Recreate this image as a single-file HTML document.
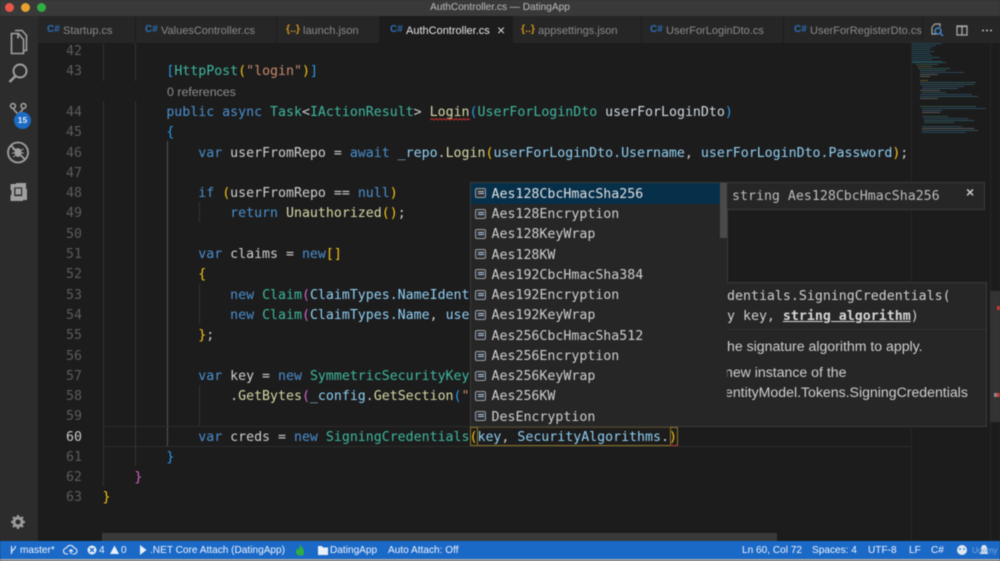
<!DOCTYPE html>
<html><head><meta charset="utf-8"><style>
html,body{margin:0;padding:0;background:#2a2a2a}
#r{position:relative;width:1000px;height:561px;overflow:hidden;background:#1c1c1c;filter:blur(.4px);font-family:"Liberation Sans",sans-serif}
#r div,#r svg,#r span.a{position:absolute}
.l{left:102.5px;height:20px;margin-top:2px;font:13.25px/20px "DejaVu Sans Mono",monospace;white-space:pre;color:#cfcfcf}
.n{left:60px;width:22px;text-align:right;height:20px;margin-top:2px;font:13.27px/20px "DejaVu Sans Mono",monospace;color:#5c5c5c}
.k{color:#4a90d0}.t{color:#3fb8a0}.v{color:#8fd0f5}.f{color:#d8d8a8}.s{color:#c98a6c}.y{color:#f5c518}.p{color:#d066c8}.b{color:#2a9ae8}
.g{width:1px;background:#333}
.tab{top:16px;height:27px;background:#262626;border-right:1px solid #1e1e1e;box-sizing:border-box}
.tl{top:16px;height:27px;font-size:11px;line-height:30px;color:#8a8a8a;white-space:pre}
.ic{top:16px;font:bold 10px/27px "Liberation Sans",sans-serif;color:#2a6fb5}
.ij{top:16px;font:bold 10.5px/27px "Liberation Sans",sans-serif;color:#c9921e}
.sb{top:541.5px;height:18px;line-height:18px;font-size:10.1px;color:#eef4fc;white-space:pre}
.w{left:491.5px;height:20px;margin-top:2px;font:13.27px/20px "DejaVu Sans Mono",monospace;color:#cfcfcf;white-space:pre}
.wi{left:475px;width:9px;height:8px;border:1px solid #a0a0a0;border-radius:2px;background:#2a3038}
.wi:after{content:"";position:absolute;left:1.5px;right:1.5px;top:2px;height:3px;border-top:1px solid #b8c8d8;border-bottom:1px solid #b8c8d8;box-sizing:border-box}
.d{white-space:pre;left:0}
</style></head><body><div id="r">

<div style="left:0;top:0;width:1000px;height:16px;background:#393939"></div>
<div style="left:4.5px;top:2.5px;width:9px;height:9px;border-radius:50%;background:#e8564a"></div>
<div style="left:20.5px;top:2.5px;width:9px;height:9px;border-radius:50%;background:#e8a02e"></div>
<div style="left:36.5px;top:2.5px;width:9px;height:9px;border-radius:50%;background:#2fae42"></div>
<div style="left:0;width:1000px;top:0;height:15px;text-align:center;line-height:15px;font-size:10.1px;color:#bdbdbd">AuthController.cs — DatingApp</div>

<div style="left:0;top:16px;width:38px;height:525px;background:#2c2c2c"></div>
<svg style="left:0;top:16px" width="38" height="525" fill="none" stroke="#a0a0a0" stroke-width="1.6">
<path d="M11.500 17.500v20h12v-14l-5-6zM15 14.500h7l4.500 5v15h-3"/>
<path d="M18 22.500v-5"/>
<circle cx="20" cy="55" r="6.500" stroke-width="1.900"/><path d="M15.500 60l-6 6" stroke-width="2.400"/>
<circle cx="13" cy="90" r="2.400"/><circle cx="23.500" cy="90" r="2.400"/><path d="M13.500 92.500c1 3 3 3.500 4.500 5.500M23 92.500c-1 3-3 3.500-4.500 5.500M18 98v3"/>
<circle cx="18" cy="136.500" r="10" stroke-width="1.800"/><path d="M11 129.500l14 14" stroke-width="1.800"/><ellipse cx="18" cy="136.500" rx="3.500" ry="4.500" fill="#a0a0a0" stroke="none"/><path d="M12.500 133l3 1.500M23.500 133l-3 1.500M12 137h3M24 137h-3M13 141l2.500-1.500M23 141l-2.500-1.500" stroke-width="1"/>
<path d="M10.500 168h5.500v-1h10v6h1v11h-4v1h-12.500v-6h1v-5h-1z" fill="#a0a0a0" stroke="none"/><rect x="14.800" y="172" width="6.800" height="7.500" fill="#2c2c2c" stroke="#2c2c2c" stroke-width="1.200"/><rect x="15.500" y="172.500" width="5.500" height="6" fill="#a0a0a0" stroke="none"/>
<g stroke="#9a9a9a"><circle cx="18" cy="506" r="4" stroke-width="3"/><path d="M18 499v3M18 510v3M11 506h3M22 506h3M13 501l2 2M21 509l2 2M23 501l-2 2M15 509l-2 2" stroke-width="2.200"/></g>
</svg>
<div style="left:14px;top:112px;width:17px;height:17px;border-radius:50%;background:#1b6ac4;color:#e8eef5;font:bold 8.500px/17px 'Liberation Sans',sans-serif;text-align:center">15</div>

<div style="left:38px;top:16px;width:962px;height:27px;background:#262626"></div>
<div class="tab" style="left:38px;width:98px"></div>
<div class="tab" style="left:136px;width:141px"></div>
<div class="tab" style="left:277px;width:103px"></div>
<div class="tab" style="left:380px;width:133px;background:#1c1c1c"></div>
<div class="tab" style="left:513px;width:129px"></div>
<div class="tab" style="left:642px;width:142px"></div>
<div class="tab" style="left:784px;width:139px"></div>
<div class="ic" style="left:47px">C#</div><div class="tl" style="left:63px">Startup.cs</div>
<div class="ic" style="left:145px">C#</div><div class="tl" style="left:161px">ValuesController.cs</div>
<div class="ij" style="left:286px">{..}</div><div class="tl" style="left:303px">launch.json</div>
<div class="ic" style="left:390px">C#</div><div class="tl" style="left:406px;color:#e6e6e6">AuthController.cs</div>
<div class="tl" style="left:497px;color:#d8d8d8;font-size:14px;line-height:28px">×</div>
<div class="ij" style="left:521px">{..}</div><div class="tl" style="left:538px">appsettings.json</div>
<div class="ic" style="left:650px">C#</div><div class="tl" style="left:666px">UserForLoginDto.cs</div>
<div class="ic" style="left:794px">C#</div><div class="tl" style="left:810px">UserForRegisterDto.cs</div>
<svg style="left:925px;top:16px" width="75" height="27" fill="none" stroke="#a8a8a8" stroke-width="1.200">
<path d="M7 11l3-3h5v3M7 11v7h5"/><circle cx="13" cy="15" r="3" stroke="#3f86c8" stroke-width="1.500"/><path d="M15 17l3 3" stroke="#3f86c8" stroke-width="1.500"/>
<rect x="32" y="10" width="10" height="9" stroke-width="1.300"/><path d="M37 10v9M32 10.500h10" stroke-width="1.300"/>
<circle cx="58" cy="14.500" r="1" fill="#b8b8b8" stroke="none"/><circle cx="62" cy="14.500" r="1" fill="#b8b8b8" stroke="none"/><circle cx="66" cy="14.500" r="1" fill="#b8b8b8" stroke="none"/>
</svg>

<div class="g" style="left:103px;top:43px;height:38px"></div><div class="g" style="left:135px;top:43px;height:38px"></div>
<div class="g" style="left:103px;top:101px;height:385px"></div><div class="g" style="left:135px;top:101px;height:365px"></div>
<div class="g" style="left:167px;top:141px;height:305px;background:#555"></div>
<div class="g" style="left:199px;top:202px;height:20px"></div>
<div class="g" style="left:199px;top:283px;height:41px"></div>
<div class="g" style="left:199px;top:385px;height:41px"></div>
<div style="left:911px;top:43px;width:1px;height:498px;background:#262626"></div>
<div style="left:990px;top:43px;width:1px;height:498px;background:#262626"></div>
<div style="left:103px;top:426px;width:808px;height:19px;border-top:1px solid #2c2c2c;border-bottom:1px solid #2c2c2c"></div>

<div class="n" style="top:40px">42</div>
<div class="n" style="top:60px">43</div>
<div class="n" style="top:101px">44</div>
<div class="n" style="top:121px">45</div>
<div class="n" style="top:142px">46</div>
<div class="n" style="top:162px">47</div>
<div class="n" style="top:182px">48</div>
<div class="n" style="top:202px">49</div>
<div class="n" style="top:223px">50</div>
<div class="n" style="top:243px">51</div>
<div class="n" style="top:263px">52</div>
<div class="n" style="top:284px">53</div>
<div class="n" style="top:304px">54</div>
<div class="n" style="top:324px">55</div>
<div class="n" style="top:345px">56</div>
<div class="n" style="top:365px">57</div>
<div class="n" style="top:385px">58</div>
<div class="n" style="top:405px">59</div>
<div class="n" style="top:426px;color:#c8c8c8">60</div>
<div class="n" style="top:446px">61</div>
<div class="n" style="top:466px">62</div>
<div class="n" style="top:486px">63</div>

<div class="l" style="top:60px">        <span class="b">[</span><span class="t">HttpPost</span><span class="y">(</span><span class="s">"login"</span><span class="y">)</span><span class="b">]</span></div>
<div style="left:167px;top:84.500px;font-size:12.400px;line-height:15px;color:#8e8e8e">0 references</div>
<div class="l" style="top:101px">        <span class="k">public async</span> <span class="t">Task</span>&lt;<span class="t">IActionResult</span>&gt; <span class="f">Login</span><span class="b">(</span><span class="t">UserForLoginDto</span> <span class="v" style="color:#d0d8e0">userForLoginDto</span><span class="b">)</span></div>
<svg style="left:430px;top:118px" width="40" height="4" fill="none" stroke="#c83030" stroke-width=".9"><path d="M0 2l2-1.500 2 1.500 2-1.500 2 1.500 2-1.500 2 1.500 2-1.500 2 1.500 2-1.500 2 1.500 2-1.500 2 1.500 2-1.500 2 1.500 2-1.500 2 1.500 2-1.500 2 1.500 2-1.500 2 1.500"/></svg>
<div class="l" style="top:121px">        <span class="b">{</span></div>
<div class="l" style="top:142px">            <span class="k">var</span> userFromRepo = <span class="k">await</span> <span class="v">_repo</span>.<span class="f">Login</span><span class="y">(</span><span class="v">userForLoginDto.Username</span>, <span class="v">userForLoginDto.Password</span><span class="y">)</span>;</div>
<div class="l" style="top:182px">            <span class="k">if</span> <span class="y">(</span>userFromRepo == <span class="k">null</span><span class="y">)</span></div>
<div class="l" style="top:202px">                <span class="k">return</span> <span class="f">Unauthorized</span><span class="y">()</span>;</div>
<div class="l" style="top:243px">            <span class="k">var</span> claims = <span class="k">new</span><span class="y">[]</span></div>
<div class="l" style="top:263px">            <span class="y">{</span></div>
<div class="l" style="top:284px">                <span class="k">new</span> <span class="t">Claim</span><span class="p">(</span><span class="v">ClaimTypes.NameIdent</span></div>
<div class="l" style="top:304px">                <span class="k">new</span> <span class="t">Claim</span><span class="p">(</span><span class="v">ClaimTypes.Name</span>, <span class="v">use</span></div>
<div class="l" style="top:324px">            <span class="y">}</span>;</div>
<div class="l" style="top:365px">            <span class="k">var</span> key = <span class="k">new</span> <span class="t">SymmetricSecurityKey</span></div>
<div class="l" style="top:385px">                .<span class="f">GetBytes</span><span class="p">(</span><span class="v">_config</span>.<span class="f">GetSection</span><span class="b">(</span><span class="s">"</span></div>
<div class="l" style="top:426px">            <span class="k">var</span> creds = <span class="k">new</span> <span class="t">SigningCredentials</span><span class="y">(</span><span class="v">key</span>, <span class="v">SecurityAlgorithms</span>.<span class="y">)</span></div>
<div class="l" style="top:446px">        <span class="b">}</span></div>
<div class="l" style="top:466px">    <span class="p">}</span></div>
<div class="l" style="top:486px"><span class="y">}</span></div>

<div style="left:470px;top:427px;width:208px;height:1px;background:#4a4020"></div>
<div style="left:470px;top:445px;width:208px;height:1px;background:#8c7426"></div>
<div style="left:470px;top:427px;width:8px;height:19px;border:1px solid #8c7426;border-bottom:0;box-sizing:border-box"></div>
<div style="left:670px;top:427px;width:8px;height:19px;border:1px solid #8c7426;border-bottom:0;box-sizing:border-box"></div>
<div style="left:670px;top:445px;width:8px;height:1px;background:#c0392b"></div>

<svg style="left:912px;top:43px" width="78" height="110"><g opacity=".55">
<rect x="0" y="0" width="30" height="1" fill="#2a6a90"/><rect x="0" y="2" width="24" height="1" fill="#2a7a80"/><rect x="0" y="4" width="20" height="1" fill="#2a6a90"/><rect x="0" y="6" width="18" height="1" fill="#2a7a80"/><rect x="0" y="8" width="22" height="1" fill="#2a6a90"/><rect x="0" y="10" width="18" height="1" fill="#2a7a80"/><rect x="0" y="12" width="20" height="1" fill="#2a6a90"/><rect x="0" y="14" width="28" height="1" fill="#2a7a80"/><rect x="0" y="16" width="20" height="1" fill="#2a6a90"/><rect x="0" y="18" width="30" height="1" fill="#2a7a80"/>
<rect x="0" y="19" width="34" height="1" fill="#2a7a80"/>
<rect x="4" y="21" width="22" height="1" fill="#3a7a70"/><rect x="6" y="23" width="14" height="1" fill="#806a40"/><rect x="6" y="25" width="32" height="1" fill="#3a7a70"/><rect x="8" y="27" width="26" height="1" fill="#3a7a90"/><rect x="8" y="29" width="44" height="1" fill="#3a6a90"/><rect x="8" y="31" width="18" height="1" fill="#888"/><rect x="8" y="33" width="10" height="1" fill="#888"/>
<rect x="8" y="37" width="8" height="1" fill="#a08030"/><rect x="8" y="39" width="56" height="1" fill="#3a7a90"/><rect x="8" y="41" width="54" height="1" fill="#3a7a70"/><rect x="10" y="43" width="42" height="1" fill="#3a6a90"/><rect x="10" y="45" width="36" height="1" fill="#3a7a90"/><rect x="8" y="47" width="20" height="1" fill="#888"/><rect x="10" y="49" width="24" height="1" fill="#3a7a70"/><rect x="8" y="51" width="52" height="1" fill="#3a6a90"/><rect x="8" y="53" width="58" height="1" fill="#3a7a90"/><rect x="8" y="55" width="18" height="1" fill="#888"/>
<rect x="8" y="63" width="56" height="1" fill="#3a7a70"/><rect x="10" y="65" width="64" height="1" fill="#3a6a90"/><rect x="10" y="67" width="20" height="1" fill="#3a7a90"/><rect x="10" y="69" width="18" height="1" fill="#888"/><rect x="10" y="73" width="26" height="1" fill="#3a7a70"/><rect x="12" y="75" width="44" height="1" fill="#3a6a90"/><rect x="12" y="77" width="50" height="1" fill="#3a7a90"/><rect x="12" y="79" width="30" height="1" fill="#3a7a70"/><rect x="10" y="83" width="40" height="1" fill="#3a6a90"/><rect x="10" y="85" width="52" height="1" fill="#888"/><rect x="10" y="87" width="56" height="1" fill="#3a7a90"/><rect x="10" y="89" width="44" height="1" fill="#3a6a90"/>
</g></svg>

<div style="left:990px;top:291px;width:10px;height:131px;background:#333"></div>
<div style="left:997px;top:306px;width:3px;height:4px;background:#c8392b"></div>
<div style="left:994px;top:393px;width:6px;height:4px;background:#8a8a8a"></div>
<div style="left:997px;top:393px;width:3px;height:4px;background:#c8392b"></div>

<div style="left:102px;top:533px;width:675px;height:8px;background:#393939"></div>

<div style="left:470px;top:182px;width:258px;height:245px;background:#262627;border:1px solid #3a3a3a;box-sizing:border-box"></div>
<div style="left:471px;top:183px;width:256px;height:21px;background:#062f4a"></div>
<div style="left:720px;top:183px;width:7px;height:55px;background:#4a4a4a"></div>
<div class="wi" style="top:188px"></div><div class="w" style="top:183px;color:#e0e0e0">Aes128CbcHmacSha256</div>
<div class="wi" style="top:209px"></div><div class="w" style="top:203px">Aes128Encryption</div>
<div class="wi" style="top:229px"></div><div class="w" style="top:223px">Aes128KeyWrap</div>
<div class="wi" style="top:249px"></div><div class="w" style="top:244px">Aes128KW</div>
<div class="wi" style="top:269px"></div><div class="w" style="top:264px">Aes192CbcHmacSha384</div>
<div class="wi" style="top:290px"></div><div class="w" style="top:284px">Aes192Encryption</div>
<div class="wi" style="top:310px"></div><div class="w" style="top:304px">Aes192KeyWrap</div>
<div class="wi" style="top:330px"></div><div class="w" style="top:325px">Aes256CbcHmacSha512</div>
<div class="wi" style="top:351px"></div><div class="w" style="top:345px">Aes256Encryption</div>
<div class="wi" style="top:371px"></div><div class="w" style="top:365px">Aes256KeyWrap</div>
<div class="wi" style="top:391px"></div><div class="w" style="top:385px">Aes256KW</div>
<div class="wi" style="top:411px"></div><div class="w" style="top:406px">DesEncryption</div>

<div style="left:727px;top:182px;width:258px;height:28px;background:#262627;border:1px solid #3a3a3a;border-left:0;box-sizing:border-box;overflow:hidden">
<div class="d" style="left:5px;top:4px;font:13.27px/20px 'DejaVu Sans Mono',monospace;color:#bcbcbc">string Aes128CbcHmacSha256</div>
<div style="left:239px;top:0;font:bold 14px/18px 'Liberation Sans',sans-serif;color:#c8c8c8">×</div>
</div>

<div style="left:727px;top:282px;width:260px;height:145px;background:#262627;border:1px solid #3a3a3a;border-left:0;box-sizing:border-box;overflow:hidden">
<div class="d" style="top:4px;font:13.27px/20px 'DejaVu Sans Mono',monospace;color:#cfcfcf">dentials.SigningCredentials(</div>
<div class="d" style="top:24px;font:13.27px/20px 'DejaVu Sans Mono',monospace;color:#cfcfcf">y key, <b style="text-decoration:underline;color:#d8d8d8">string algorithm</b>)</div>
<div style="left:0;top:46px;width:260px;height:1px;background:#333"></div>
<div class="d" style="top:55px;font-size:14.100px;line-height:16px;color:#cfcfcf">he signature algorithm to apply.</div>
<div class="d" style="left:-2px;top:81px;font-size:14.100px;line-height:16px;color:#cfcfcf">new instance of the</div>
<div class="d" style="left:-2px;top:101px;font-size:14.100px;line-height:16px;color:#cfcfcf">entityModel.Tokens.SigningCredentials</div>
</div>

<div style="left:0;top:541px;width:1000px;height:18px;background:#1b69c6"></div>
<div style="left:0;top:559px;width:1000px;height:2px;background:#a8a8a8"></div>
<svg style="left:0;top:541px" width="1000" height="18" fill="none" stroke="#e8f0fa" stroke-width="1.100">
<path d="M11.500 5v8M15.500 5c0 4-4 3-4 7"/>
<path d="M68 13h-1.500a3 3 0 0 1 0-6 4 4 0 0 1 7.500 0 3 3 0 0 1 0 6h-1.500M71 13V8.500M69 10.500l2-2 2 2"/>
<circle cx="92" cy="9" r="4.500" fill="#e8f0fa" stroke="none"/><path d="M90 7l4 4M94 7l-4 4" stroke="#1b69c6" stroke-width="1.300"/>
<path d="M114.500 4.500l4.500 8.500h-9z" fill="#e8f0fa" stroke="none"/>
<path d="M140 4l6.500 5-6.500 5z" fill="#e8f0fa" stroke="none"/>
<path d="M300 3c1 3 4 4 4 8s-2 3.500-4 3.500-4-1-4-3.500 1-2 1.500-4c.5 1 1 1.500 1.500 2z" fill="#2fae42" stroke="none"/>
<path d="M318 5h4l1 1.500h5v7.500h-10z" fill="#e8f0fa" stroke="none"/>
<circle cx="962" cy="9" r="5" fill="#e0e8f0" stroke="none"/><circle cx="960" cy="8" r=".9" fill="#1b69c6" stroke="none"/><circle cx="964" cy="8" r=".9" fill="#1b69c6" stroke="none"/>
<path d="M984 4c2 0 3 1.500 3 4v3l1.500 2h-9l1.500-2V8c0-2.500 1-4 3-4z" fill="#dfe8f2" stroke="none"/>
</svg>
<div class="sb" style="left:20px">master*</div>
<div class="sb" style="left:99px">4</div><div class="sb" style="left:121px">0</div>
<div class="sb" style="left:150px">.NET Core Attach (DatingApp)</div>
<div class="sb" style="left:330px">DatingApp</div>
<div class="sb" style="left:388px">Auto Attach: Off</div>
<div class="sb" style="left:742px">Ln 60, Col 72</div>
<div class="sb" style="left:812px">Spaces: 4</div>
<div class="sb" style="left:868px">UTF-8</div>
<div class="sb" style="left:909px">LF</div>
<div class="sb" style="left:931px">C#</div>
<div class="sb" style="left:972px;font-size:8px;color:#7fa8d8">Udemy</div>
</div></body></html>
